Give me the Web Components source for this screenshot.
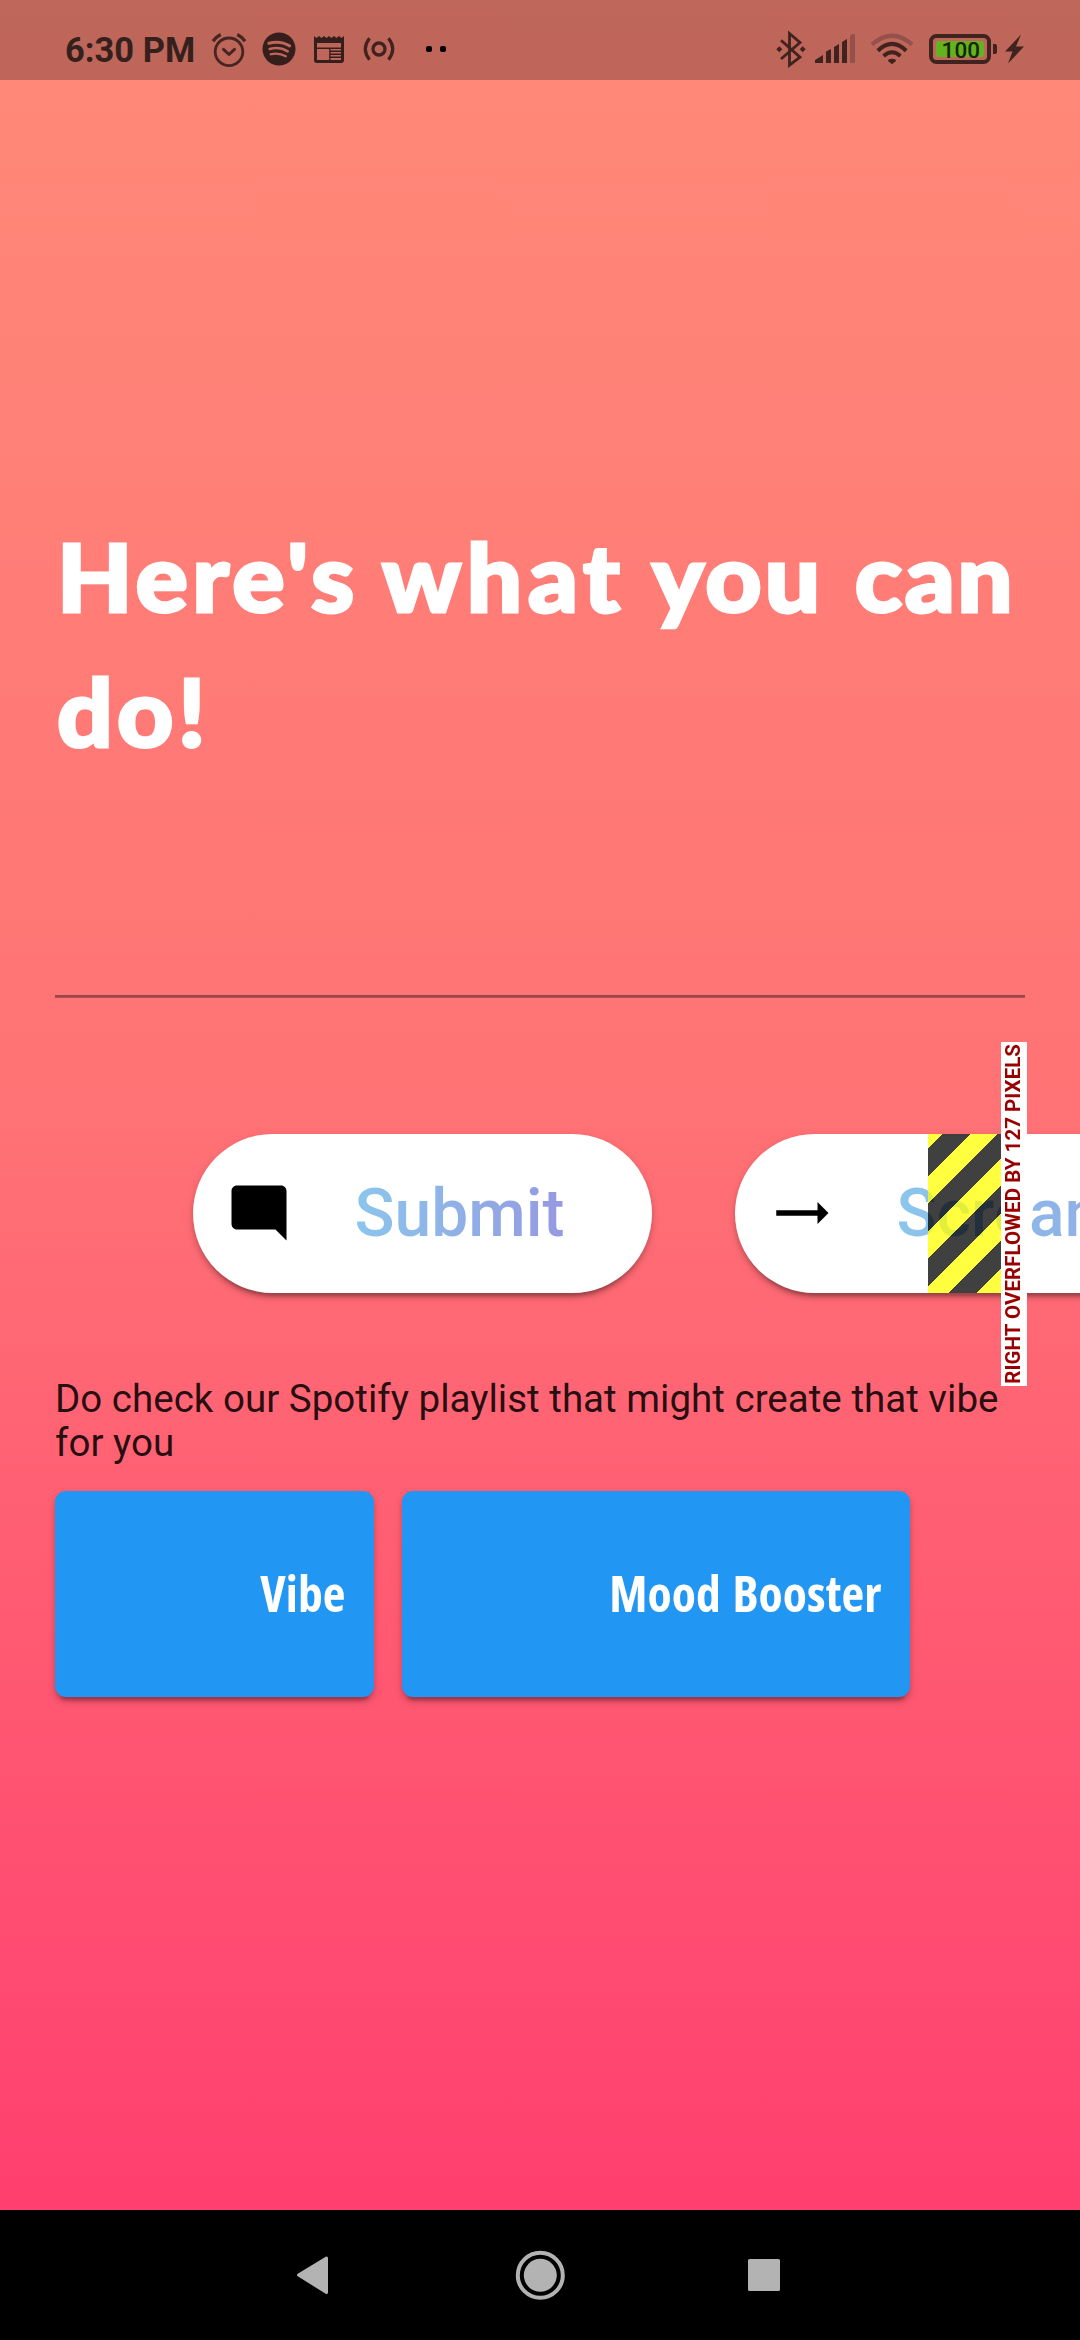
<!DOCTYPE html>
<html lang="en">
<head>
<meta charset="utf-8">
<title>What you can do</title>
<style>
html,body{margin:0;padding:0}
body{width:1080px;height:2340px;overflow:hidden;font-family:Roboto,"Liberation Sans",sans-serif}
</style>
</head>
<body>
<vibe-app></vibe-app>
<script>
function define(name, html){
  const t=document.createElement('template');
  t.innerHTML=html;
  customElements.define(name, class extends HTMLElement{
    constructor(){
      super();
      this.attachShadow({mode:'open'}).append(t.content.cloneNode(true));
    }
  });
}

define('status-bar', `
<style>
:host{display:flex;height:80px;justify-content:space-between;background:rgba(0,0,0,.25);box-sizing:border-box;padding:0 48px 0 65px;color:#35201d}
.g{display:flex;align-items:center}
.time{width:140px;font:700 34.5px/40px Roboto,sans-serif;box-sizing:border-box;height:80px;white-space:nowrap;padding-top:30px}
svg{display:block}
text{font:500 22.500px Roboto,sans-serif}
</style>
<div class="g"><div class="time">6:30 PM</div>
<svg width="48" height="80" viewBox="205 0 48 80" fill="none" stroke="#452622" stroke-width="2.8" stroke-linecap="round" stroke-linejoin="round"><circle cx="229" cy="51.8" r="13.8"/><path d="M223.5 49.3l5.5 5.2 5.5-5.2" stroke-width="3"/><path d="M213 41.2q3-4.4 7.7-6.8M245 41.2q-3-4.4-7.7-6.8" stroke-width="3.4" stroke-linecap="butt"/></svg>
<svg width="52" height="80" viewBox="253 0 52 80" fill="none" stroke="#bd6659" stroke-linecap="round"><circle cx="279" cy="49" r="16.5" fill="#351e1b" stroke="none"/><path d="M268.8 43.3q11.5-3 20.8 2.6" stroke-width="3"/><path d="M269.7 49q10-2.7 18 2.3" stroke-width="2.6"/><path d="M270.6 54.3q8-2.1 15.3 2" stroke-width="2.2"/></svg>
<svg width="49" height="80" viewBox="305 0 49 80"><path fill="#351e1b" fill-rule="evenodd" d="M314 36l2.5 2 2.5-2 2.5 2 2.5-2 2.5 2 2.5-2 2.5 2 2.5-2 2.5 2 2.5-2 2.5 2 2.5-2V60q0 3-3 3h-24q-3 0-3-3zM317 43v4.500h24V43zM317 49v11h12.200V49zM330.500 49v1.500H341V49zM330.500 52v1.500H341V52zM330.500 55v1.500H341V55zM330.500 58v2H341V58z"/></svg>
<svg width="50" height="80" viewBox="354 0 50 80" fill="none" stroke="#40231f"><circle cx="379" cy="49" r="6" stroke-width="3.3"/><path d="M369.500 38.300q-8.400 10.700 0 21.400M388.500 38.300q8.400 10.700 0 21.400" stroke-width="3.200"/></svg>
<svg width="52" height="80" viewBox="404 0 52 80" fill="#000"><rect x="426" y="46" width="6" height="6" rx="2"/><rect x="440" y="46" width="6" height="6" rx="2"/></svg>
</div>
<div class="g">
<svg width="41" height="80" viewBox="770 0 41 80" fill="none" stroke="#40231f" stroke-width="2.8"><path d="M781 40.200l19 17-10.500 8V33.500l10.500 9-19 16.500"/><path d="M776.300 49.300l3-3 3 3-3 3zM799.700 49.300l3-3 3 3-3 3z" fill="#40231f" stroke="none"/></svg>
<svg width="51" height="80" viewBox="811 0 51 80" fill="#40231f"><path d="M815 63v-3l8-5v8zM826 63V51.500l5-2.500v14zM834 63V47l5-3v19zM842 63V42l5-3v24z"/><path d="M850 63V36l2-2h3v29z" fill="#94504a"/></svg>
<svg width="60" height="80" viewBox="862 0 60 80" fill="none" stroke="#40231f" stroke-width="4"><path d="M872 44.500q20-17.500 40 0" stroke="#94504a" stroke-width="4.200"/><path d="M877.800 50.700q14.200-13.600 28.400 0"/><path d="M883.600 56q8.400-7.500 16.800 0"/><path d="M888 61q0-2.300 4-2.300t4 2.300l-4 3.300z" fill="#40231f" stroke="none"/></svg>
<svg width="79" height="80" viewBox="922 0 79 80"><rect x="931" y="36" width="58" height="26" rx="5.500" fill="none" stroke="#40231f" stroke-width="4"/><rect x="936" y="41" width="48" height="16" rx="2" fill="#63b31e"/><path fill="#40231f" d="M993 44h2q2 0 2 2v6q0 2-2 2h-2z"/><text x="960.800" y="57.600" text-anchor="middle" fill="#17250a">100</text></svg>
<svg width="31" height="80" viewBox="1001 0 31 80" fill="#40231f"><path d="M1021 34.500L1005 51.500H1012.500L1008 63.500L1024 46.500H1016z"/></svg>
</div>`);

define('page-title', `
<style>
:host{display:block;font:900 94px/135px "Lato Black",Lato,"Open Sans",sans-serif;color:#fff;-webkit-text-stroke:3px #fff;white-space:nowrap;transform:translateY(-1.500px) scaleX(1.04);transform-origin:0 0;padding-left:2px}
</style><slot></slot>`);

define('pill-button', `
<style>
:host{display:flex;flex:none;align-items:center;height:159.5px;border-radius:80px;background:#fff;box-sizing:border-box;padding:0 84px 0 33px;
box-shadow:0 8px 3px -5px rgba(0,0,0,.2),0 5px 5px rgba(0,0,0,.14),0 3px 10px rgba(0,0,0,.12)}
.icon{width:66px;height:66px;margin-right:63px}
.label{font:500 66px/77px Roboto,sans-serif;white-space:nowrap;min-width:var(--label,0);background:linear-gradient(90deg,#8bc6ec,#9599e2);-webkit-background-clip:text;background-clip:text;color:transparent}
::slotted(svg){display:block;width:66px;height:66px}
</style><div class="icon"><slot name="icon"></slot></div><div class="label"><slot></slot></div>`);

define('overflow-banner', `
<style>
:host{display:block;width:97px;height:159.5px;background:repeating-linear-gradient(135deg,rgba(255,255,0,.75) 0 10.4px,rgba(0,0,0,.75) 10.4px 29.85px,rgba(255,255,0,.75) 29.85px 38.89px)}
.tag{position:absolute;left:73.300px;top:-91.500px;width:25.400px;height:343.500px;background:#fff;color:#900;display:flex;align-items:center;justify-content:center}
span{writing-mode:vertical-rl;transform:rotate(180deg);font:700 20.500px/25px Roboto,sans-serif;white-space:nowrap;letter-spacing:.04px}
</style><div class="tag"><span><slot></slot></span></div>`);

define('playlist-card', `
<style>
:host{display:flex;flex:none;align-items:center;justify-content:flex-end;height:206.500px;box-sizing:border-box;padding:0 28.500px 2px 0;border-radius:11px;background:#2196f3;color:#fff;
font:700 49.500px/68px "Open Sans",sans-serif;font-stretch:75%;letter-spacing:.1px;word-spacing:2.500px;white-space:nowrap;
box-shadow:0 8px 3px -5px rgba(0,0,0,.2),0 5px 5px rgba(0,0,0,.14),0 3px 10px rgba(0,0,0,.12)}
</style><slot></slot>`);

define('nav-bar', `
<style>
:host{display:flex;height:130px;background:#000;justify-content:center}
svg{display:block}
</style>
<svg width="1080" height="130" viewBox="0 2210 1080 130" fill="#b3b3b3"><path d="M298.500 2275L326.500 2258V2292.500z" stroke="#b3b3b3" stroke-width="3" stroke-linejoin="round"/><circle cx="540.300" cy="2275.300" r="22.500" fill="none" stroke="#b3b3b3" stroke-width="4"/><circle cx="540.300" cy="2275.300" r="16.500"/><rect x="748" y="2259" width="32" height="32" rx="1.500"/></svg>`);

define('vibe-app', `
<style>
:host{display:flex;flex-direction:column;width:1080px;height:2340px;overflow:hidden;background:linear-gradient(180deg,#ff8a78 0,#ff7275 1105px,#ff3f6f 2210px)}
main{flex:1;display:flex;flex-direction:column;padding:429px 55px 0}
hr{border:0;margin:216px 0 0;height:3px;background:linear-gradient(rgba(0,0,0,.4) 67%,rgba(0,0,0,.3) 67%)}
.row{display:flex;gap:82.500px;position:relative;margin-top:135.500px;padding-left:137.500px}
overflow-banner{position:absolute;left:873px;top:0}
p{margin:84px 0 0;font:400 38.500px/44.300px Roboto,sans-serif;letter-spacing:.02px;color:rgba(0,0,0,.87)}
.cards{display:flex;gap:27.500px;margin-top:25.400px}
</style>
<status-bar></status-bar>
<main>
<page-title><span style="letter-spacing:4.200px">Here's</span> <span style="letter-spacing:5.500px;margin-right:3px">what</span> <span style="letter-spacing:2.900px;margin-right:8px">you</span> <span style="letter-spacing:2.500px">can</span><br><span style="letter-spacing:4px">do!</span></page-title>
<hr>
<div class="row">
<pill-button style="width:459.500px"><svg slot="icon" viewBox="0 0 24 24"><path d="M22 22l-4-4H4c-1.100 0-2-.9-2-2V4c0-1.100.9-2 2-2h16c1.100 0 2 .9 2 2z"/></svg>Submit</pill-button>
<pill-button style="width:640px;--label:393px"><svg slot="icon" viewBox="0 0 24 24"><path d="M22 12l-4-4v3H3v2h15v3z"/></svg>Scream</pill-button>
<overflow-banner>RIGHT OVERFLOWED BY 127 PIXELS</overflow-banner>
</div>
<p>Do check our Spotify playlist that might create that vibe for you</p>
<div class="cards"><playlist-card style="width:319px">Vibe</playlist-card><playlist-card style="width:508.500px">Mood Booster</playlist-card></div>
</main>
<nav-bar></nav-bar>`);
</script>
</body>
</html>
